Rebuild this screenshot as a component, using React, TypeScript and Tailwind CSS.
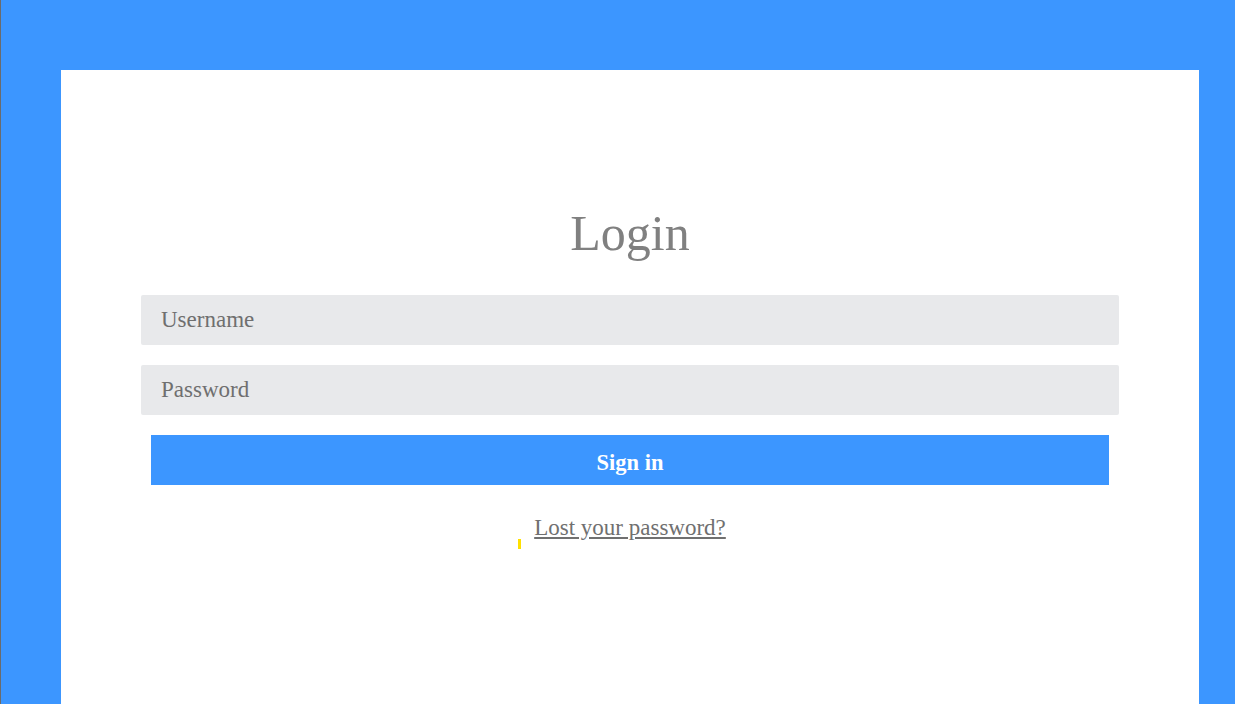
import { useState } from 'react';

export default function App() {
  const [username, setUsername] = useState('');
  const [password, setPassword] = useState('');

  return (
    <div className="min-h-[704px] h-screen bg-[#3c96ff] border-l border-[#6b6b6b] pl-[60px] pt-[70px] overflow-hidden" style={{ fontFamily: '"Liberation Serif", "Times New Roman", serif' }}>
      <div className="w-[1138px] h-full bg-white px-[80px] pt-[136px]">
        {/* heading */}
        <h1 className="text-center text-[50px] leading-[55px] text-[#808080] mb-[34px]">Login</h1>

        {/* form */}
        <form className="flex flex-col gap-[20px]" onSubmit={(e) => e.preventDefault()}>
          <input
            type="text"
            value={username}
            onChange={(e) => setUsername(e.target.value)}
            placeholder="Username"
            className="h-[50px] w-full rounded-[2px] bg-[#e8e9eb] px-[20px] text-[23px] text-[#6f6f6f] placeholder:text-[#6f6f6f] outline-none"
          />
          <input
            type="password"
            value={password}
            onChange={(e) => setPassword(e.target.value)}
            placeholder="Password"
            className="h-[50px] w-full rounded-[2px] bg-[#e8e9eb] px-[20px] text-[23px] text-[#6f6f6f] placeholder:text-[#6f6f6f] outline-none"
          />
          <div className="px-[10px]">
            <button type="submit" className="h-[50px] w-full bg-[#3c96ff] pt-[5px] text-white text-[22.5px] font-bold">
              Sign in
            </button>
          </div>
        </form>

        <div className="mt-[30px] flex justify-center">
          <a href="#" className="relative text-[23px] leading-[26px] text-[#707070] underline">
            <span className="absolute left-[-16px] top-[24px] w-[3px] h-[10px] bg-[#ffe000]" />
            Lost your password?
          </a>
        </div>
      </div>
    </div>
  );
}
